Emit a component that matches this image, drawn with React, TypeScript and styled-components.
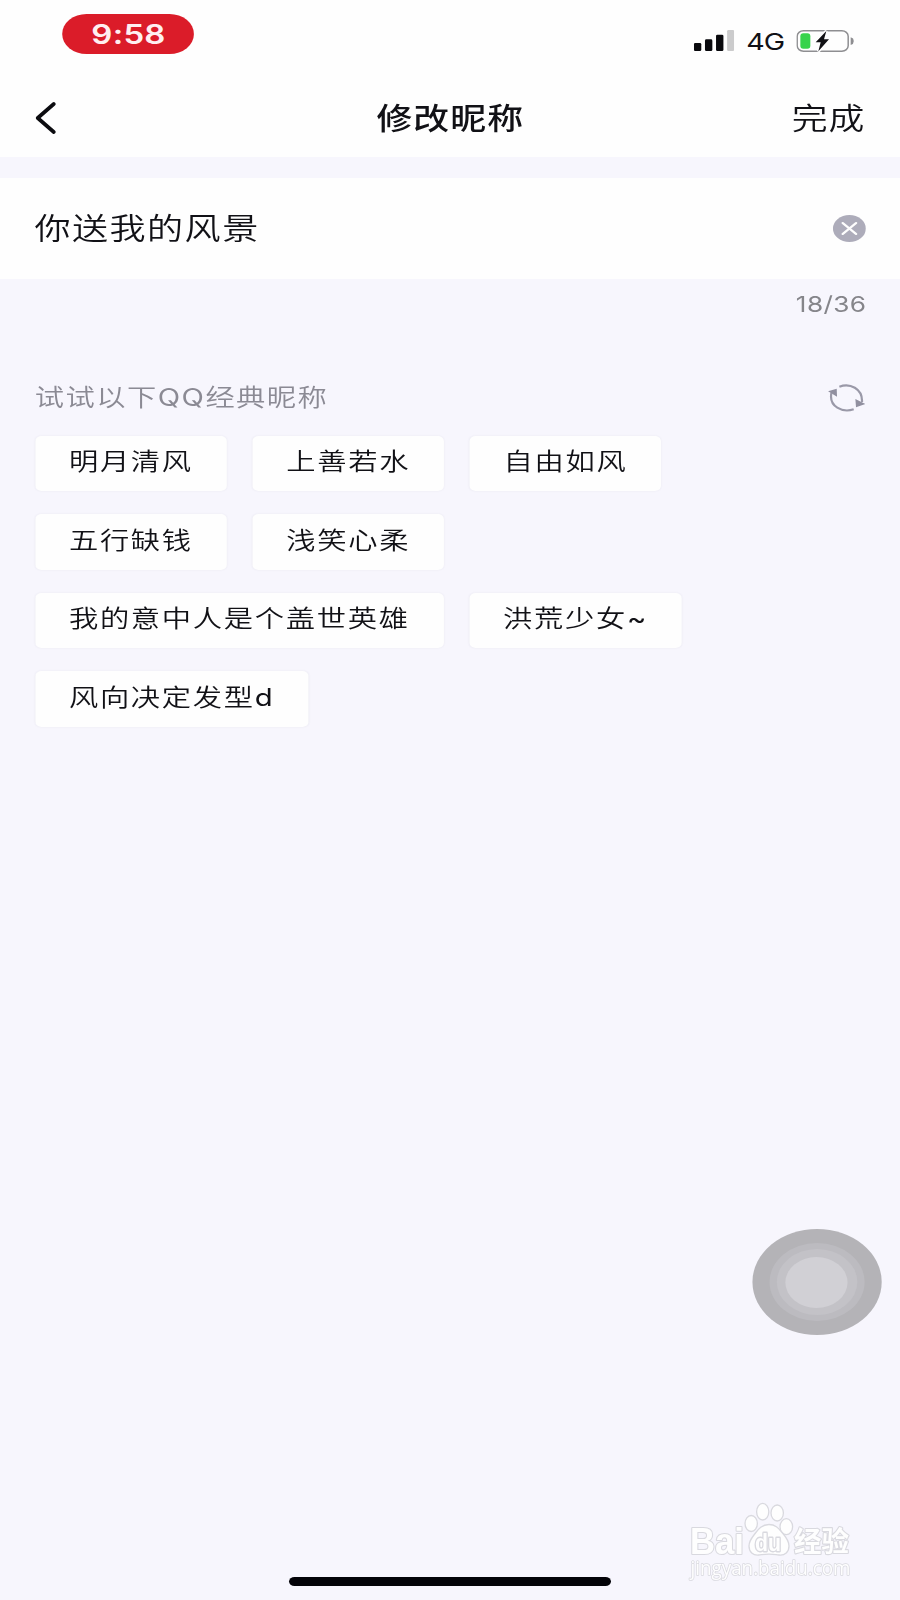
import React from "react";
import styled, { createGlobalStyle } from "styled-components";

const STRETCH = 900 / 738;
const fonts = `Inter, "Noto Sans CJK SC", sans-serif`;

const Global = createGlobalStyle`
  * { box-sizing: border-box; }
  body { margin: 0; background: #f7f6fd; }
`;

const Viewport = styled.div`
  position: relative;
  width: 900px;
  height: 1600px;
  overflow: hidden;
  background: #f7f6fd;
`;

/* The phone screen is laid out at its own proportions and widened to fill the viewport. */
const Screen = styled.main`
  position: relative;
  display: flex;
  flex-direction: column;
  width: 738px;
  height: 1600px;
  transform: scaleX(${STRETCH});
  transform-origin: 0 0;
  font-family: ${fonts};
  color: #111116;
`;

const StatusBar = styled.header`
  display: flex;
  justify-content: space-between;
  align-items: flex-start;
  height: 80px;
  padding: 14px 37.8px 0 51.4px;
  background: #fefefe;
`;

const TimePill = styled.div`
  display: flex;
  align-items: center;
  justify-content: center;
  width: 108px;
  height: 39.5px;
  padding-top: 1px;
  border-radius: 20px;
  background: #db1c29;
  color: #fff0f1;
  font-size: 27px;
  font-weight: 600;
  letter-spacing: 0.2px;
`;

const StatusIcons = styled.div`
  display: flex;
  align-items: center;
  gap: 10px;
  height: 53px;
`;

const Network = styled.span`
  width: 31px;
  padding-top: 2px;
  font-size: 23.5px;
  font-weight: 400;
  letter-spacing: -0.8px;
  line-height: 22px;
`;

const NavBar = styled.nav`
  display: grid;
  grid-template-columns: 1fr auto 1fr;
  align-items: center;
  height: 77px;
  padding: 0 28.5px 0 29px;
  background: #fefefe;
`;

const Title = styled.h1`
  margin: 0;
  font-size: 29.4px;
  font-weight: 500;
  letter-spacing: 0.9px;
  line-height: 40px;
`;

const BareButton = styled.button`
  display: flex;
  padding: 0;
  border: 0;
  background: none;
  color: inherit;
  font: inherit;
`;

const BackButton = styled(BareButton)`
  padding-bottom: 2px;
`;

const DoneButton = styled(BareButton)`
  justify-self: end;
  font-size: 29.4px;
  font-weight: 350;
  letter-spacing: 0.7px;
  line-height: 40px;
`;

const NameField = styled.section`
  display: flex;
  align-items: center;
  justify-content: space-between;
  height: 100.5px;
  margin-top: 21px;
  padding: 0 28px 0 28.2px;
  background: #fefefe;
`;

const NameValue = styled.span`
  font-size: 29.6px;
  font-weight: 350;
  letter-spacing: 1.2px;
  line-height: 40px;
`;

const Counter = styled.div`
  padding: 12px 27.5px 0 0;
  text-align: right;
  font-size: 21.5px;
  letter-spacing: 0.3px;
  line-height: 26px;
  color: #85858a;
`;

const Suggestions = styled.section`
  padding: 61.5px 28px 0 28.5px;
`;

const SuggestionHead = styled.div`
  display: flex;
  align-items: center;
  justify-content: space-between;
  height: 40px;
  margin-bottom: 17.5px;
`;

const SuggestionTitle = styled.h2`
  margin: 0;
  font-size: 24px;
  font-weight: 350;
  letter-spacing: 1.2px;
  line-height: 36px;
  color: #8b8a94;
`;

const Latin = styled.span`
  font-weight: 400;
`;

const ChipList = styled.div`
  display: flex;
  flex-wrap: wrap;
  gap: 23px 21px;
`;

const Chip = styled.button`
  height: 55.6px;
  padding: 0 27.6px 2px 28px;
  border: 0;
  border-radius: 5px;
  background: #fefefe;
  box-shadow: 0 0 2px rgba(60, 60, 90, 0.07);
  color: #111116;
  font-family: ${fonts};
  font-size: 24px;
  font-weight: 350;
  letter-spacing: 1.4px;
  line-height: 36px;
  white-space: nowrap;
`;

const AssistiveTouch = styled.div`
  position: absolute;
  left: 616.6px;
  top: 1229px;
  display: grid;
  place-items: center;
  width: 106px;
  height: 106px;
  border-radius: 50%;
  background: #b4b3b7;
`;

const Ring = styled.div<{ $size: number; $color: string }>`
  grid-area: 1 / 1;
  width: ${(p) => p.$size}px;
  height: ${(p) => p.$size}px;
  border-radius: 50%;
  background: ${(p) => p.$color};
`;

const HomeIndicator = styled.div`
  width: 264px;
  height: 8.6px;
  margin: auto auto 14.4px;
  border-radius: 5px;
  background: #030308;
`;

const Watermark = styled.svg`
  position: absolute;
  left: 670px;
  top: 1490px;
`;

const names = [
  { text: "明月清风" },
  { text: "上善若水" },
  { text: "自由如风" },
  { text: "五行缺钱" },
  { text: "浅笑心柔" },
  { text: "我的意中人是个盖世英雄" },
  { text: "洪荒少女", latin: "~" },
  { text: "风向决定发型", latin: "d" },
];

const Signal = () => (
  <svg width="33" height="21" viewBox="0 0 120 63" preserveAspectRatio="none">
    <rect x="0" y="39" width="22" height="24" rx="4" fill="#09090d" />
    <rect x="33" y="28" width="22" height="35" rx="4" fill="#09090d" />
    <rect x="66" y="14" width="22" height="49" rx="4" fill="#09090d" />
    <rect x="99" y="0" width="21" height="63" rx="4" fill="#cbcbcc" />
  </svg>
);

const Battery = () => (
  <svg width="47.3" height="22" viewBox="0 0 173 66" preserveAspectRatio="none">
    <rect x="2.5" y="2.5" width="153" height="61" rx="19" ry="16" fill="none" stroke="#8e8e91" strokeWidth="4.5" />
    <path d="M163 22q10 3 10 11t-10 12z" fill="#8e8e91" />
    <rect x="12" y="10" width="30" height="46" rx="9" fill="#37d34c" />
    <path d="M90 3 58 37h15l-7 27 32-36H83z" fill="#111115" stroke="#fefefe" strokeWidth="9" paintOrder="stroke" />
  </svg>
);

const Back = () => (
  <svg width="17" height="32" viewBox="0 0 62 96" preserveAspectRatio="none">
    <path d="M55 6 7 48l48 42" fill="none" stroke="#0c0c10" strokeWidth="11" strokeLinecap="round" strokeLinejoin="round" />
  </svg>
);

const Clear = () => (
  <svg width="27" height="27" viewBox="0 0 27 27">
    <circle cx="13.5" cy="13.5" r="13.5" fill="#adacba" />
    <path d="m8 8 11 11M19 8 8 19" stroke="#fefefe" strokeWidth="2" strokeLinecap="round" />
  </svg>
);

const Refresh = () => (
  <svg width="30.6" height="28" viewBox="266 583 112 84" preserveAspectRatio="none">
    <g fill="none" stroke="#9a99a8" strokeWidth="6.5">
      <path d="M300 591C331 579 370 596 368 637" />
      <path d="M343 659C309 670 268 651 276 610" />
    </g>
    <path d="m266 605 26-8 1 24zM378 643l-28 10-2-25z" fill="#9190a0" />
  </svg>
);

const BaiduWatermark = () => (
  <Watermark width="230" height="110" viewBox="0 0 230 110">
    <g fill="#fefefe" stroke="#d9d9df" strokeWidth="1.3" strokeLinejoin="round">
      <ellipse cx="81.2" cy="33.5" rx="6.2" ry="8" />
      <ellipse cx="92.7" cy="21.7" rx="6.1" ry="8.3" />
      <ellipse cx="107.2" cy="23" rx="6.2" ry="8" />
      <ellipse cx="116.3" cy="36.7" rx="6.3" ry="8" />
      <path d="M99 34.5c-7 0-10.5 4.500-13.500 8.500-3 4-6.500 7.500-6.500 13 0 6 4 9.500 9.700 9 4-.4 6-.8 10.300-.8s6 .4 10 .8c6 .6 10-3 10-9 0-5.500-3-9-6.500-13-3.500-4-6.500-8.500-13.500-8.500z" />
    </g>
    <g fill="#fefefe" stroke="#d9d9df" strokeWidth="2.2" paintOrder="stroke" strokeLinejoin="round" fontWeight="700">
      <text x="20" y="63.5" fontFamily="Liberation Sans" fontSize="36" textLength="54" lengthAdjust="spacingAndGlyphs">Bai</text>
      <text x="85" y="60.5" fontFamily="Liberation Sans" fontSize="23" strokeWidth="2.8" textLength="26" lengthAdjust="spacingAndGlyphs">du</text>
      <text x="124" y="61.5" fontFamily="Noto Sans CJK SC" fontSize="28" textLength="55" lengthAdjust="spacingAndGlyphs">经验</text>
      <text x="20.5" y="85.3" fontFamily="Open Sans" fontSize="20" fontWeight="400" strokeWidth="1.6" textLength="160" lengthAdjust="spacingAndGlyphs">jingyan.baidu.com</text>
    </g>
  </Watermark>
);

export default function App() {
  return (
    <Viewport>
      <Global />
      <Screen>
        <StatusBar>
          <TimePill>9:58</TimePill>
          <StatusIcons>
            <Signal />
            <Network>4G</Network>
            <Battery />
          </StatusIcons>
        </StatusBar>
        <NavBar>
          <BackButton aria-label="返回"><Back /></BackButton>
          <Title>修改昵称</Title>
          <DoneButton>完成</DoneButton>
        </NavBar>
        <NameField>
          <NameValue>你送我的风景</NameValue>
          <BareButton aria-label="清除"><Clear /></BareButton>
        </NameField>
        <Counter>18/36</Counter>
        <Suggestions>
          <SuggestionHead>
            <SuggestionTitle>试试以下<Latin>QQ</Latin>经典昵称</SuggestionTitle>
            <BareButton aria-label="换一批"><Refresh /></BareButton>
          </SuggestionHead>
          <ChipList>
            {names.map(({ text, latin }) => (
              <Chip key={text}>
                {text}
                {latin && <Latin>{latin}</Latin>}
              </Chip>
            ))}
          </ChipList>
        </Suggestions>
        <HomeIndicator />
        <AssistiveTouch>
          <Ring $size={78} $color="#bcbbc0" />
          <Ring $size={66} $color="#c3c2c7" />
          <Ring $size={51} $color="#d1d0d5" />
        </AssistiveTouch>
      </Screen>
      <BaiduWatermark />
    </Viewport>
  );
}
